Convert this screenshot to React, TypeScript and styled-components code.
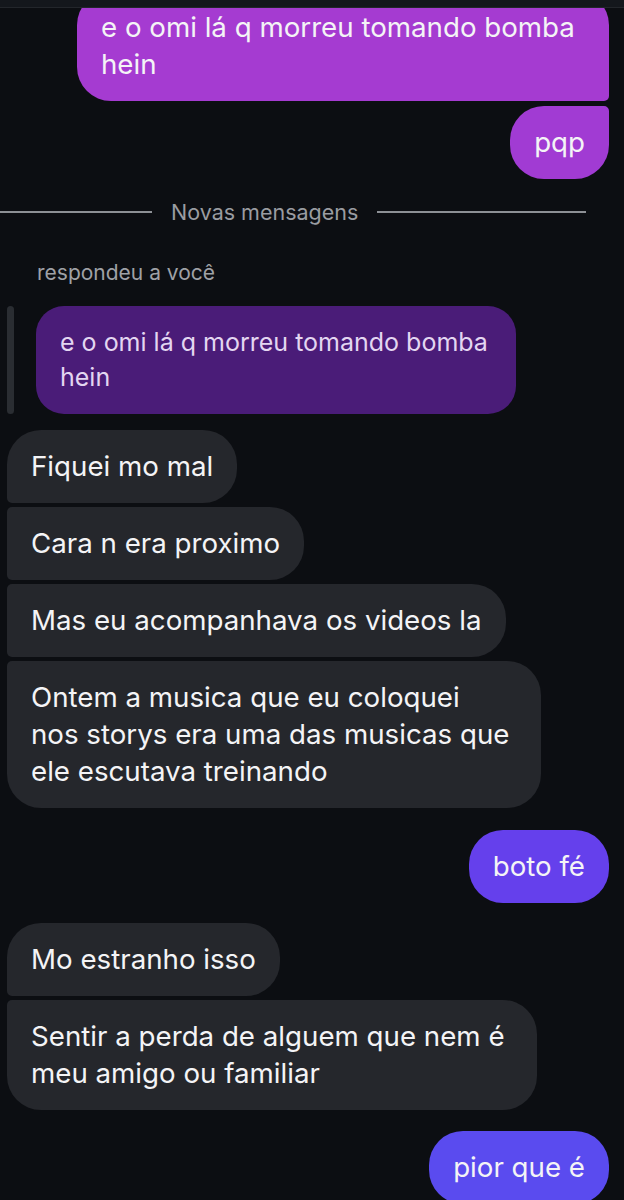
import React from 'react';
import styled, { createGlobalStyle, css } from 'styled-components';

const GlobalStyle = createGlobalStyle`
  html, body {
    margin: 0;
    padding: 0;
    background: #0c0e12;
  }
  body {
    font-family: Inter, "Noto Sans", "Liberation Sans", sans-serif;
    -webkit-font-smoothing: antialiased;
  }
`;

const Screen = styled.div`
  position: relative;
  width: 624px;
  height: 1200px;
  overflow: hidden;
  background: #0c0e12;
`;

const TopBar = styled.div`
  position: absolute;
  top: 0;
  left: 0;
  right: 0;
  height: 7px;
  background: #14171c;
  border-bottom: 1px solid #23262b;
  z-index: 2;
`;

const Thread = styled.div`
  display: flex;
  flex-direction: column;
  margin-top: -9px;
  padding: 0 15px 0 7px;
`;

const Row = styled.div<{ $side: 'in' | 'out'; $gap: number }>`
  display: flex;
  justify-content: ${(p) => (p.$side === 'out' ? 'flex-end' : 'flex-start')};
  margin-top: ${(p) => p.$gap}px;
`;

type Corners = { tl?: boolean; tr?: boolean; bl?: boolean; br?: boolean };

const BIG = 34;
const SMALL = 5;

const Bubble = styled.div<{ $bg: string; $c: Corners; $w?: number }>`
  box-sizing: border-box;
  ${(p) => p.$w && `width: ${p.$w}px;`}
  padding: 18px 24px;
  font-size: 27.7px;
  line-height: 37px;
  white-space: nowrap;
  color: #f4f4f6;
  background: ${(p) => p.$bg};
  ${(p) => css`
    border-radius: ${p.$c.tl ? SMALL : BIG}px ${p.$c.tr ? SMALL : BIG}px
      ${p.$c.br ? SMALL : BIG}px ${p.$c.bl ? SMALL : BIG}px;
  `}
`;

const Divider = styled.div`
  display: flex;
  align-items: center;
  gap: 19px;
  height: 22px;
  margin: 22px 0 0 -7px;
  font-size: 21.5px;
  color: #9a9ca1;
`;

const Rule = styled.span<{ $w: number }>`
  display: block;
  width: ${(p) => p.$w}px;
  height: 1.5px;
  background: #8d9095;
`;

const ReplyLabel = styled.div`
  margin: 39px 0 0 30px;
  font-size: 21px;
  line-height: 22px;
  color: #9fa1a6;
`;

const QuoteRow = styled.div`
  display: flex;
  gap: 22px;
  margin-top: 22px;
`;

const QuoteBar = styled.div`
  width: 7px;
  border-radius: 4px;
  background: #2a2d32;
`;

const QuoteBubble = styled.div`
  box-sizing: border-box;
  width: 480px;
  padding: 19px 24px;
  border-radius: 28px;
  background: #4a1c78;
  color: #e3d6f1;
  font-size: 25px;
  line-height: 35px;
`;

type Msg = {
  side: 'in' | 'out';
  lines: string[];
  gap: number;
  bg?: string;
  c?: Corners;
  w?: number;
};

const RECEIVED = '#25272c';

const before: Msg[] = [
  {
    side: 'out',
    lines: ['e o omi lá q morreu tomando bomba', 'hein'],
    gap: 0,
    bg: '#a53bd1',
    c: { br: true },
    w: 532,
  },
  { side: 'out', lines: ['pqp'], gap: 5, bg: '#a13bd3', c: { tr: true } },
];

const after: Msg[] = [
  { side: 'in', lines: ['Fiquei mo mal'], gap: 16, c: { bl: true } },
  { side: 'in', lines: ['Cara n era proximo'], gap: 4, c: { tl: true, bl: true } },
  { side: 'in', lines: ['Mas eu acompanhava os videos la'], gap: 4, c: { tl: true, bl: true } },
  {
    side: 'in',
    lines: ['Ontem a musica que eu coloquei', 'nos storys era uma das musicas que', 'ele escutava treinando'],
    gap: 4,
    c: { tl: true },
    w: 534,
  },
  { side: 'out', lines: ['boto fé'], gap: 22, bg: '#6540ec' },
  { side: 'in', lines: ['Mo estranho isso'], gap: 20, c: { bl: true } },
  {
    side: 'in',
    lines: ['Sentir a perda de alguem que nem é', 'meu amigo ou familiar'],
    gap: 4,
    c: { tl: true },
    w: 530,
  },
  { side: 'out', lines: ['pior que é'], gap: 21, bg: '#5a4bef' },
];

function Message({ m }: { m: Msg }) {
  return (
    <Row $side={m.side} $gap={m.gap}>
      <Bubble $bg={m.bg ?? RECEIVED} $c={m.c ?? {}} $w={m.w}>
        {m.lines.map((line, i) => (
          <React.Fragment key={i}>
            {i > 0 && <br />}
            {line}
          </React.Fragment>
        ))}
      </Bubble>
    </Row>
  );
}

export default function App() {
  return (
    <>
      <GlobalStyle />
      <Screen>
        <TopBar />
        <Thread>
          {before.map((m, i) => (
            <Message key={`b-${i}`} m={m} />
          ))}

          <Divider>
            <Rule $w={152} />
            <span>Novas mensagens</span>
            <Rule $w={209} />
          </Divider>

          <ReplyLabel>respondeu a você</ReplyLabel>
          <QuoteRow>
            <QuoteBar />
            <QuoteBubble>e o omi lá q morreu tomando bomba hein</QuoteBubble>
          </QuoteRow>

          {after.map((m, i) => (
            <Message key={`a-${i}`} m={m} />
          ))}
        </Thread>
      </Screen>
    </>
  );
}
